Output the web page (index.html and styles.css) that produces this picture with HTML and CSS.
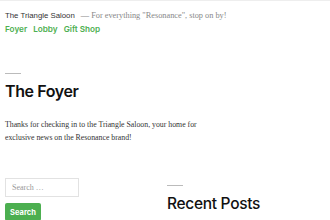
FILE: index.html
```html
<!DOCTYPE html>
<html lang="en">
<head>
  <meta charset="UTF-8">
  <meta name="viewport" content="width=device-width, initial-scale=1.0">
  <title>The Triangle Saloon</title>
  <link rel="stylesheet" href="styles.css">
</head>
<body>
  <header class="site-header">
    <div class="branding">
      <span class="site-title">The Triangle Saloon</span>
      <span class="site-desc">— For everything "Resonance", stop on by!</span>
    </div>
    <nav class="main-nav">
      <a href="#">Foyer</a>
      <a href="#">Lobby</a>
      <a href="#">Gift Shop</a>
    </nav>
  </header>

  <main class="content">
    <hr class="sep">
    <h1>The Foyer</h1>
    <p>Thanks for checking in to the Triangle Saloon, your home for exclusive news on the Resonance brand!</p>
  </main>

  <aside class="widgets">
    <div class="widget search-widget">
      <input type="search" placeholder="Search …">
      <button>Search</button>
    </div>
    <div class="widget">
      <hr class="sep">
      <h2>Recent Posts</h2>
    </div>
  </aside>
</body>
</html>
```

FILE: styles.css
```css
body {
  margin: 0;
  padding: 0;
  background: #fff;
  color: #111;
  font-family: "Liberation Serif", serif;
  border-top: 1px solid #eee;
}
.site-header {
  padding: 5px 5px 0;
}
.branding {
  line-height: 13px;
}
.site-title {
  font-family: "Liberation Sans", sans-serif;
  font-size: 7.8px;
  color: #333;
}
.site-desc {
  font-size: 8.3px;
  color: #888;
  margin-left: 2px;
}
.main-nav {
  display: flex;
  gap: 6px;
  margin-top: 1px;
}
.main-nav a {
  font-family: Inter, sans-serif;
  font-weight: 600;
  font-size: 8.2px;
  line-height: 12px;
  color: #4caf50;
  text-decoration: none;
}
.content {
  padding: 0 5px;
  margin-top: 38px;
}
.sep {
  width: 16px;
  margin: 0;
  border: none;
  border-top: 1px solid #bbb;
}
h1 {
  font-family: Inter, sans-serif;
  font-size: 16px;
  font-weight: 600;
  margin: 6px 0 0;
  line-height: 22px;
  letter-spacing: -0.4px;
}
.content p {
  font-size: 7.8px;
  line-height: 13px;
  color: #333;
  width: 200px;
  margin: 16px 0 0;
}
.widgets {
  display: grid;
  grid-template-columns: 162px 1fr;
  padding: 0 5px;
  margin-top: 34px;
}
.search-widget input {
  display: block;
  box-sizing: border-box;
  width: 74px;
  height: 19px;
  border: 1px solid #e2e2e2;
  padding: 0 6px;
  font-family: "Liberation Serif", serif;
  font-size: 8px;
}
.search-widget input::placeholder {
  color: #999;
}
.search-widget button {
  display: block;
  margin-top: 6px;
  width: 36px;
  height: 18px;
  border: none;
  border-radius: 2px;
  background: #4caf50;
  color: #fff;
  font-family: Inter, sans-serif;
  font-weight: 700;
  font-size: 7.5px;
  padding: 0;
}
.widgets .widget + .widget {
  padding-top: 7px;
}
h2 {
  font-family: Inter, sans-serif;
  font-size: 15.5px;
  font-weight: 500;
  margin: 7px 0 0;
  line-height: 22px;
  letter-spacing: -0.3px;
}
```
